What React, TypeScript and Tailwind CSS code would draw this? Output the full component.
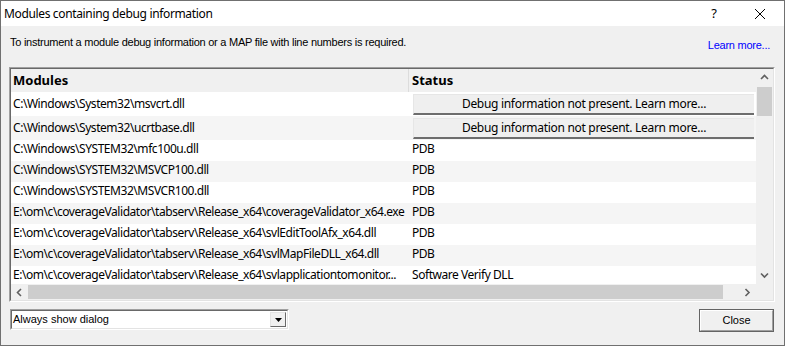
import React from "react";

const rows = [
  { path: "C:\\Windows\\System32\\msvcrt.dll", status: null },
  { path: "C:\\Windows\\System32\\ucrtbase.dll", status: null },
  { path: "C:\\Windows\\SYSTEM32\\mfc100u.dll", status: "PDB" },
  { path: "C:\\Windows\\SYSTEM32\\MSVCP100.dll", status: "PDB" },
  { path: "C:\\Windows\\SYSTEM32\\MSVCR100.dll", status: "PDB" },
  { path: "E:\\om\\c\\coverageValidator\\tabserv\\Release_x64\\coverageValidator_x64.exe", status: "PDB" },
  { path: "E:\\om\\c\\coverageValidator\\tabserv\\Release_x64\\svlEditToolAfx_x64.dll", status: "PDB" },
  { path: "E:\\om\\c\\coverageValidator\\tabserv\\Release_x64\\svlMapFileDLL_x64.dll", status: "PDB" },
  { path: "E:\\om\\c\\coverageValidator\\tabserv\\Release_x64\\svlapplicationtomonitor...", status: "Software Verify DLL" },
];

function Chevron({ dir }: { dir: "up" | "down" | "left" | "right" }) {
  const d = {
    up: "M1 5 L4.5 1.5 L8 5",
    down: "M1 1.5 L4.5 5 L8 1.5",
    left: "M5 1 L1.5 4.5 L5 8",
    right: "M1.5 1 L5 4.5 L1.5 8",
  }[dir];
  const vertical = dir === "up" || dir === "down";
  return (
    <svg width={vertical ? 9 : 7} height={vertical ? 7 : 9} viewBox={vertical ? "0 0 9 7" : "0 0 7 9"}>
      <path d={d} fill="none" stroke="#606060" strokeWidth="1.6" />
    </svg>
  );
}

export default function App() {
  const ui = { fontFamily: '"Noto Sans", sans-serif' };
  const classic = { fontFamily: '"Liberation Sans", Arial, sans-serif' };

  return (
    <div className="w-[785px] h-[346px] border border-[#707070] bg-[#f0f0f0] flex flex-col overflow-hidden" style={ui}>
      {/* title bar */}
      <div className="h-[25px] bg-white flex items-center shrink-0">
        <span className="pl-[3px] text-[12px] tracking-[-0.35px] text-black">Modules containing debug information</span>
        <span className="ml-auto w-[46px] text-center text-[13px] text-black">?</span>
        <span className="w-[46px] flex justify-center mr-[1px]">
          <svg width="10" height="10" viewBox="0 0 10 10">
            <path d="M0 0 L10 10 M10 0 L0 10" stroke="#000" strokeWidth="1" />
          </svg>
        </span>
      </div>

      {/* intro */}
      <div className="h-[41px] flex items-start text-[11px] tracking-[-0.25px] shrink-0" style={classic}>
        <span className="pl-[9px] pt-[8px] text-black">
          To instrument a module debug information or a MAP file with line numbers is required.
        </span>
        <span className="ml-auto pr-[14px] pt-[11px] text-[#0000ff]">Learn more...</span>
      </div>

      {/* list */}
      <div className="ml-[8px] w-[766px] h-[235px] border border-t-[#a0a0a0] border-l-[#a0a0a0] border-r-[#fff] border-b-[#fff] shrink-0">
        <div className="w-full h-full border border-t-[#696969] border-l-[#696969] border-r-[#e3e3e3] border-b-[#e3e3e3] flex flex-col bg-white">
          <div className="flex flex-1 min-h-0">
            <div className="flex-1 flex flex-col overflow-hidden text-[12px] tracking-[-0.45px] text-black">
              <div className="h-[23px] shrink-0 bg-[#f0f0f0] flex items-center font-bold text-[13px] tracking-normal">
                <span className="w-[398px] pl-[2px] border-r border-[#dcdcdc] h-full flex items-center">Modules</span>
                <span className="pl-[3px]">Status</span>
              </div>
              {rows.map((r, i) => (
                <div
                  key={i}
                  className={`flex shrink-0 items-center ${r.status ? "h-[21px] pb-[4px]" : "h-[24px]"} ${i % 2 ? "bg-[#f5f5f5]" : "bg-white"}`}
                >
                  <span className="w-[398px] pl-[2px] whitespace-nowrap overflow-hidden">{r.path}</span>
                  {r.status ? (
                    <span className="pl-[3px] whitespace-nowrap">{r.status}</span>
                  ) : (
                    <span className="ml-[4px] w-[341px] h-[21px] mt-[1px] bg-[#efefef] border-t border-l border-[#e6e6e6] border-b-2 border-b-[#6d6d6d] flex items-center justify-center tracking-[-0.3px]">
                      Debug information not present. Learn more...
                    </span>
                  )}
                </div>
              ))}
            </div>
            {/* vertical scrollbar */}
            <div className="w-[17px] bg-[#f0f0f0] flex flex-col items-center shrink-0">
              <div className="h-[17px] flex items-center justify-center">
                <Chevron dir="up" />
              </div>
              <div className="w-[15px] h-[29px] bg-[#cdcdcd] mt-[1px]" />
              <div className="flex-1" />
              <div className="h-[17px] flex items-center justify-center">
                <Chevron dir="down" />
              </div>
            </div>
          </div>
          {/* horizontal scrollbar */}
          <div className="h-[16px] flex shrink-0 bg-[#f0f0f0]">
            <div className="w-[17px] flex items-center justify-center">
              <Chevron dir="left" />
            </div>
            <div className="w-[695px] my-[1px] bg-[#cdcdcd]" />
            <div className="flex-1" />
            <div className="w-[17px] flex items-center justify-center">
              <Chevron dir="right" />
            </div>
            <div className="w-[17px]" />
          </div>
        </div>
      </div>

      {/* bottom */}
      <div className="flex items-start mt-[7px] text-[11px]" style={classic}>
        <div className="ml-[9px] w-[279px] h-[21px] border border-t-[#a0a0a0] border-l-[#a0a0a0] border-r-white border-b-white">
          <div className="w-full h-full border border-t-[#696969] border-l-[#696969] border-r-[#e3e3e3] border-b-[#e3e3e3] bg-white flex items-center">
            <span className="pl-[1px] flex-1 text-black">Always show dialog</span>
            <div className="w-[16px] h-[15px] bg-[#f0f0f0] border border-t-[#e3e3e3] border-l-[#e3e3e3] border-r-[#696969] border-b-[#696969] flex items-center justify-center mr-[1px]">
              <svg width="7" height="4" viewBox="0 0 7 4">
                <path d="M0 0 H7 L3.5 4 Z" fill="#000" />
              </svg>
            </div>
          </div>
        </div>
        <div className="ml-auto mr-[10px] w-[75px] h-[23px] border border-[#646464]">
          <div className="w-full h-full border border-t-white border-l-white border-r-[#a0a0a0] border-b-[#a0a0a0] bg-[#f0f0f0] flex items-center justify-center text-black">
            Close
          </div>
        </div>
      </div>
    </div>
  );
}
